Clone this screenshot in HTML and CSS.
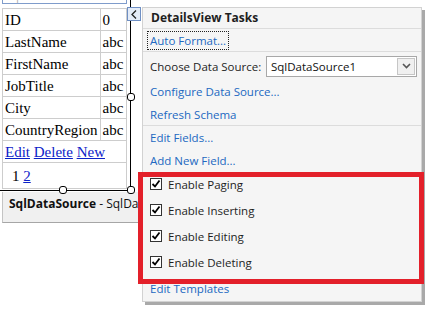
FILE: index.html
```html
<!DOCTYPE html>
<html lang="en">
<head>
  <meta charset="UTF-8" />
  <title>DetailsView Tasks</title>
  <link rel="stylesheet" href="styles.css">
</head>
<body>
  <div class="surface">
    <div class="left">
      <div class="ctl-tab"><span>asp:DetailsView#DetailsView1</span></div>
      <table class="dv">
        <tr><td class="name">ID</td><td>0</td></tr>
        <tr><td class="name">LastName</td><td>abc</td></tr>
        <tr><td class="name">FirstName</td><td>abc</td></tr>
        <tr><td class="name">JobTitle</td><td>abc</td></tr>
        <tr><td class="name">City</td><td>abc</td></tr>
        <tr><td class="name">CountryRegion</td><td>abc</td></tr>
        <tr><td colspan="2"><a href="#">Edit</a> <a href="#">Delete</a> <a href="#">New</a></td></tr>
        <tr class="pager"><td colspan="2">1 <a href="#">2</a></td></tr>
      </table>
      <div class="sqlds"><b>SqlDataSource</b> - SqlDataSource1</div>
    </div>

    <!-- selection frame -->
    <div class="sel-v"></div>
    <div class="sel-h"></div>
    <div class="handle h-right"></div>
    <div class="handle h-bottom"></div>
    <div class="handle h-corner"></div>

    <button class="smart-tag" aria-label="Close tasks">
      <svg width="6" height="9" viewBox="0 0 6 9"><path d="M5 0.5 L1 4.5 L5 8.5" fill="none" stroke="#222" stroke-width="1.3"/></svg>
    </button>

    <div class="tasks">
      <div class="task-head">DetailsView Tasks</div>
      <div class="task-row sep"><a class="focused" href="#">Auto Format...</a></div>
      <div class="task-row choose">
        <span>Choose Data Source:</span>
        <div class="select">
          <span>SqlDataSource1</span>
          <span class="drop">
            <svg width="9" height="6" viewBox="0 0 9 6"><path d="M1 1 L4.5 4.5 L8 1" fill="none" stroke="#555" stroke-width="1.6"/></svg>
          </span>
        </div>
      </div>
      <div class="task-row"><a href="#">Configure Data Source...</a></div>
      <div class="task-row sep"><a href="#">Refresh Schema</a></div>
      <div class="task-row"><a href="#">Edit Fields...</a></div>
      <div class="task-row short"><a href="#">Add New Field...</a></div>
      <label class="check-row"><span class="box"><svg width="10" height="10" viewBox="0 0 10 10"><path d="M1.5 5 L4 7.5 L8.5 1.5" fill="none" stroke="#000" stroke-width="1.8"/></svg></span>Enable Paging</label>
      <label class="check-row"><span class="box"><svg width="10" height="10" viewBox="0 0 10 10"><path d="M1.5 5 L4 7.5 L8.5 1.5" fill="none" stroke="#000" stroke-width="1.8"/></svg></span>Enable Inserting</label>
      <label class="check-row"><span class="box"><svg width="10" height="10" viewBox="0 0 10 10"><path d="M1.5 5 L4 7.5 L8.5 1.5" fill="none" stroke="#000" stroke-width="1.8"/></svg></span>Enable Editing</label>
      <label class="check-row"><span class="box"><svg width="10" height="10" viewBox="0 0 10 10"><path d="M1.5 5 L4 7.5 L8.5 1.5" fill="none" stroke="#000" stroke-width="1.8"/></svg></span>Enable Deleting</label>
      <div class="task-row last"><a href="#">Edit Templates</a></div>
      <div class="highlight"></div>
    </div>
  </div>
</body>
</html>
```

FILE: styles.css
```css
* {
  margin: 0;
  padding: 0;
  box-sizing: border-box;
}
body {
  background: #fff;
  font-family: 'Liberation Serif', serif;
}

.surface {
  position: relative;
  width: 435px;
  height: 311px;
  overflow: hidden;
}

.left {
  width: 142px;
  padding-left: 2px;
}

.ctl-tab {
  width: 125px;
  height: 4px;
  overflow: hidden;
  border: 1px solid #7f9ccb;
  border-top: none;
  background: #fff;
  margin-bottom: 4px;
  font-family: 'Open Sans', sans-serif;
  font-size: 10px;
  color: #aaa;
}
.ctl-tab span {
  display: block;
  margin-top: -10px;
  line-height: 12px;
  padding-left: 3px;
  white-space: nowrap;
}

/* DetailsView */
.dv {
  width: 125px;
  border-collapse: collapse;
  font-size: 15px;
  color: #000;
}
.dv td {
  border: 1px solid #cdcdcd;
  height: 22px;
  padding: 0 2px;
  line-height: 18px;
  white-space: nowrap;
}
.dv .name {
  width: 97px;
}
.dv a {
  color: #0c22c8;
}
.dv .pager td {
  height: 26px;
  padding-left: 9px;
}

.sqlds {
  margin-top: 3px;
  width: 170px;
  height: 31px;
  background: #f0f0f0;
  border-left: 1px solid #c4c4c4;
  border-bottom: 1px solid #a6a6a6;
  padding-left: 6px;
  line-height: 23px;
  font-family: 'Open Sans', sans-serif;
  font-size: 12px;
  color: #111;
  white-space: nowrap;
}

/* selection frame */
.sel-v {
  position: absolute;
  left: 130px;
  top: 0;
  width: 1px;
  height: 191px;
  background: #000;
}
.sel-h {
  position: absolute;
  left: 0;
  top: 190px;
  width: 131px;
  height: 1px;
  background: #000;
}
.handle {
  position: absolute;
  width: 8px;
  height: 8px;
  background: #fff;
  border: 1px solid #000;
  border-radius: 3px;
}
.h-right { left: 127px; top: 93px; }
.h-bottom { left: 59px; top: 186px; }
.h-corner { left: 127px; top: 186px; }

.smart-tag {
  position: absolute;
  left: 127px;
  top: 7px;
  width: 14px;
  height: 14px;
  border: 1px solid #6e8fc4;
  background: #e4ecf8;
  display: flex;
  align-items: center;
  justify-content: center;
}

/* tasks panel */
.tasks {
  position: absolute;
  left: 142px;
  top: 7px;
  width: 280px;
  height: 295px;
  background: #f5f5f5;
  border: 1px solid #d2d2d2;
  box-shadow: 3px 3px 0 #a9a9a9;
  font-family: 'Open Sans', sans-serif;
  font-size: 11.5px;
  color: #1e1e1e;
  padding: 0 4px 0 7px;
}
.tasks a {
  color: #2168c1;
  text-decoration: none;
}
.task-head {
  height: 21px;
  line-height: 20px;
  font-weight: bold;
  font-size: 12px;
  border-bottom: 1px solid #dcdcdc;
  margin: 0 -4px 0 -7px;
  padding-left: 8px;
}
.task-row {
  height: 23px;
  display: flex;
  align-items: center;
}
.task-row.sep {
  border-bottom: 1px solid #dcdcdc;
  margin: 0 -4px 0 -7px;
  padding-left: 7px;
}
.focused {
  outline: 1px dotted #222;
  outline-offset: 1px;
  padding: 0 1px;
  margin-left: -1px;
}
.task-row.choose {
  height: 28px;
  justify-content: space-between;
}
.task-row.short {
  height: 22px;
}
.select {
  width: 151px;
  height: 21px;
  border: 1px solid #a8a8a8;
  background: #fff;
  display: flex;
  align-items: center;
  justify-content: space-between;
  padding: 0 1px 0 4px;
  color: #111;
}
.drop {
  width: 18px;
  height: 17px;
  border: 1px solid #c6c6c6;
  background: #f0f0f0;
  display: flex;
  align-items: center;
  justify-content: center;
}
.check-row {
  height: 26px;
  display: flex;
  align-items: center;
  gap: 6px;
}
.box {
  width: 12px;
  height: 12px;
  border: 1px solid #333;
  background: #fff;
  display: flex;
  align-items: center;
  justify-content: center;
}
.task-row.last {
  height: 26px;
}

/* red annotation drawn over the checkboxes */
.highlight {
  position: absolute;
  left: -5px;
  top: 164px;
  width: 286px;
  height: 112px;
  border: 5px solid #e3202a;
}
```
